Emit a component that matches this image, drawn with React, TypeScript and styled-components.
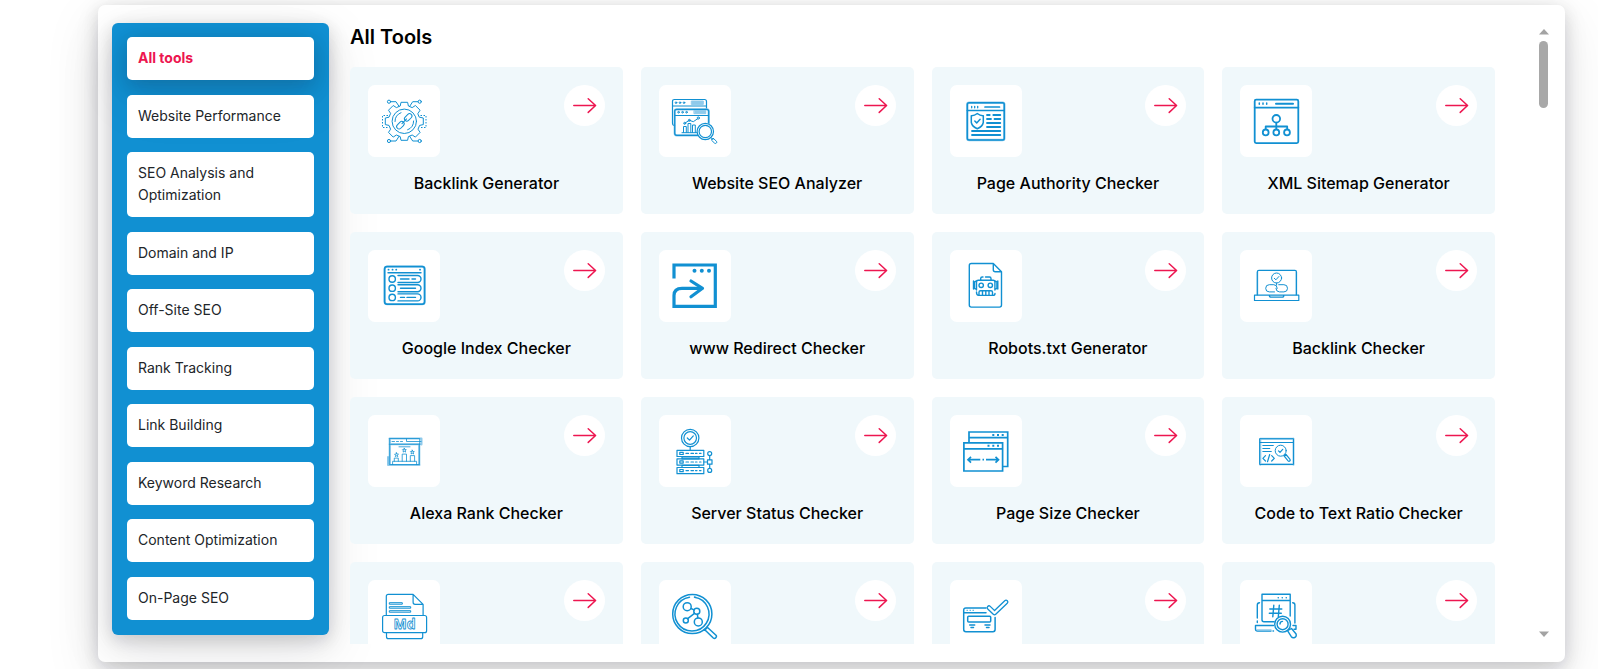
import React, { useState } from "react";
import styled, { createGlobalStyle } from "styled-components";

const blue = "#1190d2";
const pale = "#8fcaeb";
const red = "#ed1650";
const softShadow =
  "0 4px 16px rgba(17, 17, 26, 0.1), 0 8px 24px rgba(17, 17, 26, 0.1), 0 16px 56px rgba(17, 17, 26, 0.1)";

const GlobalStyle = createGlobalStyle`
  *, *::before, *::after { box-sizing: border-box; }
  body {
    margin: 0;
    background: #fff;
    color: #000;
    font-family: Inter, "Liberation Sans", sans-serif;
  }
`;

const Page = styled.div`
  padding: 5px 33px 7px 98px;
  overflow: hidden;
`;

const Panel = styled.div`
  display: flex;
  align-items: flex-start;
  gap: 21px;
  padding: 18px 14px;
  border-radius: 7px;
  background: #fff;
  box-shadow: ${softShadow};
`;

const Sidebar = styled.nav`
  display: flex;
  flex: 0 0 217px;
  flex-direction: column;
  justify-content: space-between;
  min-height: 612px;
  padding: 14px 15px 15px;
  border-radius: 6px;
  background: ${blue};
  box-shadow: ${softShadow};
`;

const CategoryButton = styled.button<{ $active: boolean }>`
  padding: 10px 11px 11px;
  border: 0;
  border-radius: 5px;
  background: #fff;
  color: ${(p) => (p.$active ? red : "#212529")};
  font-family: inherit;
  font-size: 14px;
  font-weight: ${(p) => (p.$active ? 700 : 400)};
  line-height: 22px;
  text-align: left;
  cursor: pointer;
  box-shadow: ${(p) => (p.$active ? softShadow : "none")};
`;

const Main = styled.main`
  display: flex;
  flex: 1;
  min-width: 0;
  height: 621px;
`;

const ScrollPane = styled.div`
  flex: 1;
  min-width: 0;
  padding-right: 41px;
  overflow-y: auto;
  scrollbar-width: none;
`;

const Heading = styled.h1`
  margin: 0 0 16px;
  font-size: 20px;
  font-weight: 600;
  line-height: 28px;
`;

const Grid = styled.div`
  display: grid;
  grid-template-columns: repeat(4, minmax(0, 1fr));
  gap: 18px;
`;

const Card = styled.a`
  display: flex;
  flex-direction: column;
  gap: 14px;
  padding: 18px 18px 19px;
  border-radius: 5px;
  background: #f0f8fb;
  color: #000;
  text-decoration: none;
`;

const CardTop = styled.div`
  display: flex;
  align-items: flex-start;
  justify-content: space-between;
`;

const IconTile = styled.span`
  display: grid;
  place-items: center;
  width: 72px;
  height: 72px;
  border-radius: 7px;
  background: #fff;
`;

const ArrowBadge = styled.span`
  display: grid;
  place-items: center;
  width: 41px;
  height: 41px;
  border-radius: 50%;
  background: #fff;
`;

const CardTitle = styled.span`
  font-size: 16px;
  font-weight: 500;
  line-height: 24px;
  text-align: center;
`;

const ScrollTrack = styled.div`
  display: flex;
  flex: 0 0 15px;
  flex-direction: column;
  align-items: center;
  padding: 6px 0 7px;
`;

const ScrollThumb = styled.div`
  width: 9px;
  height: 67px;
  margin: 6px 0 auto;
  border-radius: 5px;
  background: #a8a8a8;
`;

const ScrollArrow = styled.svg`
  display: block;
  width: 10px;
  height: 6px;
  fill: #a3a3a3;
`;

const Drawing = styled.svg`
  display: block;
  width: 48px;
  height: 48px;
  fill: none;
  stroke: ${blue};
  stroke-width: 1;
  stroke-linecap: round;
  stroke-linejoin: round;
`;

/* Outline of an eight-toothed cog centred on (cx, cy). */
function cogPath(cx: number, cy: number, outer: number, inner: number) {
  const points: string[] = [];
  for (let i = 0; i < 8; i++) {
    const mid = (i * Math.PI) / 4;
    const corners: [number, number][] = [
      [-0.26, inner],
      [-0.17, outer],
      [0.17, outer],
      [0.26, inner],
    ];
    corners.forEach(([offset, radius]) => {
      const x = cx + radius * Math.cos(mid + offset);
      const y = cy + radius * Math.sin(mid + offset);
      points.push(`${x.toFixed(1)} ${y.toFixed(1)}`);
    });
  }
  return `M${points.join("L")}Z`;
}

const icons: Record<string, React.ReactNode> = {
  gear: (
    <>
      <path d={cogPath(24.3, 24.3, 19.3, 15.8)} />
      <circle cx="24.3" cy="24.3" r="12.2" />
      <path d="M15 24.5a9.3 9.3 0 0 1 6-8.8M33.6 24a9.3 9.3 0 0 1-6 8.8" />
      <g transform="rotate(-45 24.3 24.3)">
        <rect x="14.5" y="21.9" width="8.6" height="4.8" rx="2.4" />
        <rect x="25.5" y="21.9" width="8.6" height="4.8" rx="2.4" />
        <path d="M21 24.3h6.6" />
      </g>
      <circle cx="9" cy="4.7" r="1.6" />
      <circle cx="39.7" cy="4.7" r="1.6" />
      <circle cx="9" cy="44" r="1.6" />
      <circle cx="39.7" cy="44" r="1.6" />
      <path d="M10.8 4.7h5.2l3 4.6M37.9 4.7h-5.2l-3 4.6M10.8 44h5.2l3-4.6M37.9 44h-5.2l-3-4.6" />
      <path strokeDasharray="1.5 1.5" strokeLinecap="butt" d="M8 18.5H2.5v12H8M40.5 18.5H46v12h-5.5" />
    </>
  ),
  analyzer: (
    <>
      <rect x="20.7" y="4" width="11.6" height="3.4" fill={pale} stroke={pale} />
      <rect x="23.3" y="13.3" width="11.4" height="3.4" fill={pale} stroke={pale} />
      <path strokeWidth="1.2" d="M3.7 28.7Q1.5 28.5 1.5 26V4.5q0-2 2-2h30q2 0 2 2V12M1.5 9h34" />
      <rect x="3.7" y="12.3" width="34" height="26" rx="2" stroke={pale} strokeWidth="2.2" />
      <path strokeWidth="1.2" d="M27 38.3H5.7q-2 0-2-2v-22q0-2 2-2h30q2 0 2 2V26M3.7 18.5h34" />
      <circle cx="5" cy="5.7" r=".8" />
      <circle cx="9" cy="5.7" r=".8" />
      <circle cx="13" cy="5.7" r=".8" />
      <circle cx="7.5" cy="15.2" r=".8" />
      <circle cx="11.5" cy="15.2" r=".8" />
      <circle cx="15.5" cy="15.2" r=".8" />
      <path d="M11 35.7h15M12.5 35.5V29.5h2.8v6M17 35.5V26.5h2.8v9M21.5 35.5V28h2.8v7.5" />
      <path d="M13.7 26.3l4.6-3 4 1.4 5-3.4" />
      <circle cx="13.7" cy="26.3" r="1" />
      <circle cx="18.3" cy="23.3" r="1" />
      <circle cx="27.3" cy="21" r="1.1" fill="#fff" />
      <circle cx="34.3" cy="34.5" r="8.2" fill="#fff" strokeWidth="1.2" />
      <circle cx="34.3" cy="34.5" r="6.2" strokeWidth="1.2" />
      <path d="M40 40.7l2 2M42.3 41.3l3.2 3q.8 1-.2 1.8t-1.8 0l-2.900-2.8z" />
    </>
  ),
  authority: (
    <>
      <rect x="5.3" y="5.7" width="37" height="37.3" rx="1.8" stroke={pale} strokeWidth="2.4" />
      <rect x="5.3" y="5.7" width="37" height="37.3" rx="1.8" strokeWidth="1.4" />
      <path strokeWidth="1.4" d="M5.3 13.5h37" />
      <path strokeWidth="1.3" d="M9.7 9.3v1.5M12.7 9.3v1.5M15.7 9.3v1.5" />
      <path strokeWidth="1.7" d="M23 10h14.5" />
      <path strokeWidth="1.5" d="M15.3 16.5q3 2.4 6 2.2v6.8q-.8 4-6 6.3-5.2-2.300-6-6.3v-6.8q3 .2 6-2.2zM12.8 24l1.9 1.900 3.4-3.7" />
      <path strokeWidth="1.8" d="M25 18h2.7M31.3 18h7M25 22h4M32.5 22h5.8M25 26h13.3M25 30h13.3M10 34h28.3M10 38h28.3" />
    </>
  ),
  sitemap: (
    <g strokeWidth="1.8">
      <rect x="2.7" y="2.7" width="43.6" height="43.4" rx="1.5" />
      <path d="M2.7 10.6h43.6M24.3 25.7v6.5M13.7 32v-2.5h21.500V32" />
      <path strokeWidth="1.5" d="M7.3 6v1.300M11 6v1.300M14.7 6v1.300" />
      <path strokeWidth="2" d="M24 6.700h17" />
      <circle cx="24.3" cy="21.8" r="3.8" />
      <circle cx="13.7" cy="35.4" r="2.9" />
      <circle cx="24.3" cy="35.4" r="2.9" />
      <circle cx="35" cy="35.4" r="2.9" />
    </g>
  ),
  list: (
    <g strokeWidth="1.4">
      <rect x="4.6" y="4.6" width="40" height="37.6" rx="2.5" stroke={pale} strokeWidth="2.2" />
      <rect x="4.6" y="4.6" width="40" height="37.6" rx="2.5" strokeWidth="1.5" />
      <path d="M8 10.700h33" />
      <path strokeWidth="1.8" d="M8.500 7.700h.1M12.500 7.700h.1M16.200 7.700h.1M40 7.700h.1" />
      {[17, 26.2, 35.4].map((y) => (
        <g key={y}>
          <circle cx="12.2" cy={y} r="3.2" />
          <path d={`M18 ${y - 3.5}h19.5a3.5 3.5 0 0 1 0 7H18`} />
        </g>
      ))}
      <path d="M20.5 17h8.5M32 17h3.5M20.5 26.2h15M20.5 35.4h4M27 35.4h8.5" />
    </g>
  ),
  redirect: (
    <g strokeWidth="3.2" strokeLinecap="butt" strokeLinejoin="miter">
      <path d="M3 16.5V3h41.300v41.300H3V33.500q0-7.200 8-7.200h20" />
      <path strokeLinecap="round" strokeLinejoin="round" d="M20 19l11.500 7.300L20 34.700" />
      <g fill={blue} stroke="none">
        <circle cx="23.5" cy="8.8" r="2" />
        <circle cx="30.8" cy="8.8" r="2" />
        <circle cx="38" cy="8.8" r="2" />
      </g>
    </g>
  ),
  robot: (
    <g strokeWidth="1.4">
      <path d="M31.3 1.5H9.3q-2 0-2 2v39.6q0 2 2 2h28.2q2 0 2-2V9.7zM31.3 1.500v6.200q0 2 2 2h6.200" />
      <path d="M18.7 18.3v-1.800q0-1.500 1.500-1.500h.8M23.500 15h4q1.500 0 1.500 1.500v1.800" />
      <path d="M14.5 28V20q0-1.700 1.700-1.700h15q1.700 0 1.700 1.700v8M14.500 18.800l-2 1v6.500l2 1M32.900 18.800l2 1v6.500l-2 1M11.500 19v8M35.800 19v8" />
      <circle cx="19.2" cy="23.3" r="2.2" />
      <circle cx="28.3" cy="23.3" r="2.2" />
      <path d="M14.5 30q0 3.400 2 3.400h14.500q2 0 2-2M17 33.300v-3q0-1.500 1.500-1.500H29q1.500 0 1.500 1.500v3M20.500 29v4M23.800 29v4M27 29v4" />
    </g>
  ),
  laptop: (
    <>
      <path stroke={pale} strokeWidth="1.5" d="M5.5 33V10M44.200 33V10" />
      <path strokeWidth="1.2" d="M5.3 33V10q0-1.600 1.600-1.600h36q1.600 0 1.600 1.600v23M2.500 33.200h44.300v5.300H2.500zM17.300 33.200q0 2 1.800 2h11q1.800 0 1.800-2" />
      <circle cx="24.6" cy="16" r="5" />
      <path d="M22.3 16.3l1.600 1.500 3-3.300M24.600 21v2" />
      <path d="M22.5 29.900h-5.200a3.600 3.600 0 0 1 0-7.200h4.500q3.200 0 3.500 3.600M26.700 22.700h5.200a3.600 3.600 0 0 1 0 7.200h-4.500q-3.200 0-3.500-3.600" />
    </>
  ),
  podium: (
    <g strokeWidth=".8">
      <path stroke={pale} strokeWidth="2" d="M9.500 11.500h32v6M9.700 17.300h30M8 30v8h31.500M39 17v21M10 12v26" />
      <path d="M9.700 11.500h30v26h-30zM9.700 17.300h30M12 14.500h2.500M16.500 14.500h2M20.500 14.500h2M26.500 12v2.500H41M19 19.800h11" />
      <path d="M14.300 34.300v-3.200h4v3.200M22.200 34.300v-7.200h4.300v7.200M30.300 34.300V28.600h4.300v5.700M12.600 37.500v-3.200h24v3.200" />
      <path d="M16.500 25.800l.6 1.300 1.400.1-1.100 1 .4 1.400-1.300-.8-1.200.8.3-1.400-1-1 1.400-.1zM24.300 21.300l.6 1.300 1.400.1-1.100 1 .4 1.400-1.300-.8-1.200.8.3-1.400-1-1 1.400-.1zM32.300 23.200l.6 1.300 1.400.1-1.100 1 .4 1.400-1.300-.8-1.200.8.3-1.400-1-1 1.400-.1z" />
    </g>
  ),
  server: (
    <g strokeWidth="1.2">
      <circle cx="19.2" cy="11" r="8.7" />
      <circle cx="19.2" cy="11" r="6.3" />
      <path d="M16.300 11l2.200 2.200 3.800-4.300M19.200 19.700v3.600" />
      <rect x="11" y="29.7" width="17" height="2.3" fill={pale} />
      <rect x="11" y="38.3" width="17" height="2.2" />
      {[23.3, 31.9, 40.5].map((y) => (
        <g key={y}>
          <rect x="6" y={y} width="26.8" height="6.2" />
          <rect x="8.8" y={y + 2} width="3.4" height="2.2" />
          <path d={`M15 ${y + 3.1}h2.5M20 ${y + 3.1}h2.5M24.5 ${y + 3.1}h1.5M28.5 ${y + 3.1}h1.5`} />
        </g>
      ))}
      <circle cx="38.7" cy="26.6" r="2" />
      <circle cx="38.7" cy="43.4" r="2" />
      <path d="M33 35h3.500M36.500 32.800h4.500v4.400h-4.500zM38.700 28.600v4.200M38.700 37.200v4.200" />
    </g>
  ),
  pagesize: (
    <g strokeWidth="1.700" strokeLinejoin="miter" strokeLinecap="butt">
      <path d="M7 15.500V5h38.700v34.500H41M7 10.700h38.700M1.900 15.800h38.700V44H1.900zM1.900 21.800h38.700" />
      <path strokeWidth="2" d="M30.300 8h2M35 8h2M39.700 8h2M25.500 18.800h2M30.300 18.800h2M35 18.800h2" />
      <path d="M6 32.700h12.300M20.500 32.700h1.500M24 32.700h12.500M9 29.800l-3 2.900 3 2.900M33.500 29.800l3 2.900-3 2.900" />
    </g>
  ),
  code: (
    <>
      <path stroke={pale} strokeWidth="2" d="M8.300 11.700v26M41.500 11.700v26M8.300 37.300h33M8.300 11.700h33" />
      <path d="M8 11.700h33.500v25.800H8zM8 15.500h33.500M10.800 18.500h10.500M10.800 21.500h7M10.800 24.500h8.500" />
      <circle cx="28.7" cy="23.7" r="5.5" />
      <path strokeWidth="1.2" d="M26.500 23.900l1.500 1.400 2.700-3M33 27.500l1 1M34 27.400l4 5q.5 1-.3 1.600t-1.600-.2L32 28.900zM13.500 28.700l-2.600 2.600 2.600 2.700M19.700 28.700l2.600 2.600-2.600 2.700M17.700 27.500l-2.200 7.200" />
    </>
  ),
  markdown: (
    <g strokeWidth="1.2">
      <path d="M6.300 23.300V4.300q0-2 2-2h24.800l10 10v11M33.100 2.300v8q0 2 2 2h8M6.500 40.700v4q0 2 2 2h32.200q2 0 2-2v-4" />
      <rect x="2.6" y="23.5" width="44" height="17.2" rx="2" />
      <path strokeWidth="1" d="M9.700 10.700h12.600v1.500H9.700zM9.700 14.700h21v1.500h-21zM9.700 18.700h21v1.500h-21z" />
      <text
        x="24.5"
        y="37.4"
        textAnchor="middle"
        fontSize="14"
        fontWeight="700"
        fontFamily="Open Sans, sans-serif"
        fill="#fff"
        strokeWidth=".8"
      >
        Md
      </text>
    </g>
  ),
  network: (
    <g strokeWidth="1.5">
      <circle cx="21.3" cy="22" r="19.6" />
      <path d="M23.500 5.200a17 17 0 1 1-5 0M25 5.400l-1.500-.3" />
      <circle cx="16.2" cy="14.7" r="4" />
      <circle cx="25.8" cy="19.2" r="3" />
      <circle cx="14.8" cy="28.5" r="2.5" />
      <circle cx="27.3" cy="29.9" r="4" />
      <path d="M20 16.500l3 1.400M23.500 21.400l-6.800 5.200M26.300 22.200l.6 3.700" />
      <path d="M33.500 38.200l2.600-2.400M36.300 35.300L45 43.200q1 1.200-.2 2.500t-2.500.3l-8.300-8z" />
    </g>
  ),
  approved: (
    <g strokeWidth="1.5">
      <path d="M24 16H3.900q-2.200 0-2.200 2.200v19.300q0 2.200 2.200 2.200h27q2.200 0 2.200-2.200V25.500M1.700 20.700H24" />
      <path strokeWidth="1" d="M5 18.300h.4M8 18.300h.4M11 18.300h.4" />
      <rect x="5.7" y="24.2" width="23" height="5.8" rx="1" />
      <path d="M7.700 33h5M9 35.500h2.500M23 33h5M24.500 35.500H27" />
      <path strokeWidth="4.9" d="M27 15.700l5.500 5.300L44 10" />
      <path strokeWidth="2.3" stroke="#fff" d="M27 15.700l5.500 5.300L44 10" />
    </g>
  ),
  hashtag: (
    <g strokeWidth="1.4">
      <path d="M22 29.700H12q-2 0-2-2V2.300h28.200V24M10 8.500h28.200M24.500 29.700h.5" />
      <path strokeWidth="1.5" d="M26.200 5.700h.1M30.200 5.700h.1M34.200 5.700h.1" />
      <path d="M7.500 10.800Q5.300 11 5.300 13v13M5.300 29v1.500M40.700 10.800q2.200.2 2.200 2.200v18M21.500 33.500H3.500V37q0 2 2 2H19M21 39h.5" />
      <path d="M21.800 13.300l-1 11.500M27.300 13.300l-1 11.500M17.800 17h12M17.300 21.200h12" />
      <path stroke={pale} d="M5 38h14" />
      <path d="M41 33.500h3v3.800h-2" />
      <circle cx="30.6" cy="32.2" r="7.9" fill="#fff" />
      <circle cx="30.6" cy="32.2" r="5.5" />
      <path fill="#fff" d="M35.500 38.700l4-2.200 4.600 5.500q.7 2.800-1.400 3.500t-3.400-.8z" />
      <path d="M28 32q0-2.300 2.500-2.600" />
    </g>
  ),
};

const categories = [
  "All tools",
  "Website Performance",
  "SEO Analysis and Optimization",
  "Domain and IP",
  "Off-Site SEO",
  "Rank Tracking",
  "Link Building",
  "Keyword Research",
  "Content Optimization",
  "On-Page SEO",
];

const tools: { name: string; icon: string }[] = [
  { name: "Backlink Generator", icon: "gear" },
  { name: "Website SEO Analyzer", icon: "analyzer" },
  { name: "Page Authority Checker", icon: "authority" },
  { name: "XML Sitemap Generator", icon: "sitemap" },
  { name: "Google Index Checker", icon: "list" },
  { name: "www Redirect Checker", icon: "redirect" },
  { name: "Robots.txt Generator", icon: "robot" },
  { name: "Backlink Checker", icon: "laptop" },
  { name: "Alexa Rank Checker", icon: "podium" },
  { name: "Server Status Checker", icon: "server" },
  { name: "Page Size Checker", icon: "pagesize" },
  { name: "Code to Text Ratio Checker", icon: "code" },
  { name: "", icon: "markdown" },
  { name: "", icon: "network" },
  { name: "", icon: "approved" },
  { name: "", icon: "hashtag" },
];

function ToolCard({ name, icon }: { name: string; icon: string }) {
  return (
    <Card href="#">
      <CardTop>
        <IconTile>
          <Drawing viewBox="0 0 48 48" aria-hidden="true">
            {icons[icon]}
          </Drawing>
        </IconTile>
        <ArrowBadge>
          <svg
            width="25"
            height="25"
            viewBox="0 0 25 25"
            fill="none"
            stroke={red}
            strokeWidth="1.5"
            strokeLinecap="round"
            strokeLinejoin="round"
            aria-hidden="true"
          >
            <path d="M1.800 12.500h21.700M16.200 5.700l7.400 6.800-7.400 6.900" />
          </svg>
        </ArrowBadge>
      </CardTop>
      <CardTitle>{name || "\u00a0"}</CardTitle>
    </Card>
  );
}

export default function App() {
  const [active, setActive] = useState(categories[0]);
  return (
    <>
      <GlobalStyle />
      <Page>
        <Panel>
          <Sidebar aria-label="Tool categories">
            {categories.map((category) => (
              <CategoryButton
                key={category}
                type="button"
                $active={category === active}
                onClick={() => setActive(category)}
              >
                {category}
              </CategoryButton>
            ))}
          </Sidebar>
          <Main>
            <ScrollPane>
              <Heading>All Tools</Heading>
              <Grid>
                {tools.map((tool) => (
                  <ToolCard key={tool.icon} name={tool.name} icon={tool.icon} />
                ))}
              </Grid>
            </ScrollPane>
            <ScrollTrack aria-hidden="true">
              <ScrollArrow viewBox="0 0 10 6">
                <path d="M5 0l5 5.500H0z" />
              </ScrollArrow>
              <ScrollThumb />
              <ScrollArrow viewBox="0 0 10 6">
                <path d="M0 .5h10L5 6z" />
              </ScrollArrow>
            </ScrollTrack>
          </Main>
        </Panel>
      </Page>
    </>
  );
}
